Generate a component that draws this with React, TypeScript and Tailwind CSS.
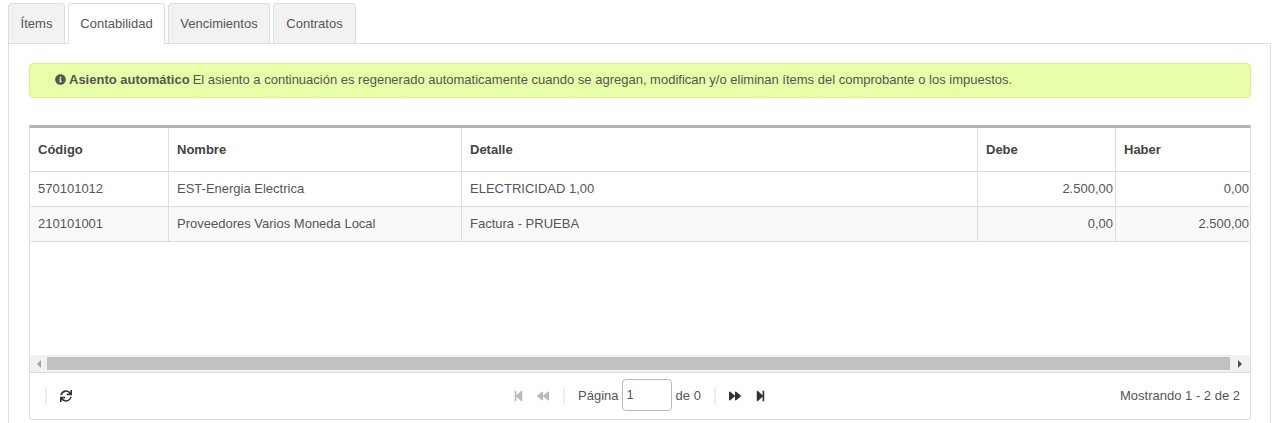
import { FaInfoCircle, FaSync, FaStepBackward, FaBackward, FaForward, FaStepForward } from "react-icons/fa";

const tabs = ["Ítems", "Contabilidad", "Vencimientos", "Contratos"];
const rows = [
  ["570101012", "EST-Energia Electrica", "ELECTRICIDAD 1,00", "2.500,00", "0,00"],
  ["210101001", "Proveedores Varios Moneda Local", "Factura - PRUEBA", "0,00", "2.500,00"],
];
const cols = "grid grid-cols-[139px_293px_516px_138px_134px]";

export default function App() {
  return (
    <div className="h-[423px] w-[1276px] overflow-hidden bg-white pl-2 pr-[5px] pt-[3px] text-[13px] leading-5 text-[#555] font-['Liberation_Sans',Arial,sans-serif]">
      <div className="relative z-10 flex h-[41px] gap-[3px]">
        {tabs.map((t, i) => (
          <div
            key={t}
            className={
              i === 1
                ? "flex h-[41px] w-[97px] items-center justify-center rounded-t border border-b-0 border-[#ddd] bg-white"
                : `flex h-[40px] items-center justify-center rounded-t border border-b-0 border-[#ddd] bg-[#f2f2f2] text-[#555] ${i === 0 ? "w-[57px]" : i === 2 ? "w-[102px]" : "w-[83px]"}`
            }
          >
            {t}
          </div>
        ))}
      </div>
      <div className="-mt-px h-[400px] border border-[#ddd] pl-5 pr-[19px] pt-[19px]">
        <div className="flex h-[35px] items-center rounded border border-[#d9f57e] bg-[#e6ffa8] pb-px pl-[25px]">
          <FaInfoCircle className="mr-[3px] h-[11px] w-[11px] -translate-y-px text-[#555]" />
          <b className="mr-[3px]">Asiento automático</b>
          <span>El asiento a continuación es regenerado automaticamente cuando se agregan, modifican y/o eliminan ítems del comprobante o los impuestos.</span>
        </div>
        <div className="mt-[27px] flex h-[295px] flex-col rounded-b border border-t-[3px] border-[#ddd] border-t-[#b3b3b3]">
          <div className={`${cols} h-[44px] border-b border-[#ddd] font-bold text-[#444]`}>
            {["Código", "Nombre", "Detalle", "Debe", "Haber"].map((h, i) => (
              <div key={h} className={`flex items-center px-2 ${i < 4 ? "border-r border-[#ddd]" : ""}`}>{h}</div>
            ))}
          </div>
          {rows.map((r, ri) => (
            <div key={r[0]} className={`${cols} h-[35px] border-b border-[#ddd] ${ri === 1 ? "bg-[#f9f9f9]" : ""}`}>
              {r.map((c, i) => (
                <div
                  key={i}
                  className={`flex items-center ${i === 3 ? "justify-end pr-0.5" : i === 4 ? "justify-end pr-px" : "px-2"} ${i < 4 ? "border-r border-[#ddd]" : ""}`}
                >
                  {c}
                </div>
              ))}
            </div>
          ))}
          <div className="flex-1" />
          <div className="flex h-[18px] items-center border-b border-[#ddd] bg-[#f1f1f1]">
            <div className="flex w-[17px] justify-center">
              <div className="h-0 w-0 border-y-[4px] border-r-[4px] border-y-transparent border-r-[#a3a3a3]" />
            </div>
            <div className="h-[13px] flex-1 bg-[#c1c1c1]" />
            <div className="flex w-[20px] justify-center">
              <div className="h-0 w-0 border-y-[4px] border-l-[4px] border-y-transparent border-l-[#505050]" />
            </div>
          </div>
          <div className="flex h-[46px] items-center justify-between pl-[15px] pr-[10px]">
            <div className="flex w-[300px] items-center">
              <div className="h-[18px] w-0.5 bg-[#eee]" />
              <FaSync className="ml-[13px] h-3 w-3 text-[#333]" />
            </div>
            <div className="flex items-center">
              <FaStepBackward className="h-3 w-[11px] text-[#bbb]" />
              <FaBackward className="ml-3 h-3 w-[14px] text-[#bbb]" />
              <div className="mx-[13px] h-[18px] w-0.5 bg-[#eee]" />
              <span>Página</span>
              <div className="mb-0.5 ml-[3px] mr-1 flex h-8 w-[50px] items-center rounded border border-[#bbb] px-1 text-[#555]">1</div>
              <span>de 0</span>
              <div className="ml-[13px] mr-3 h-[18px] w-0.5 bg-[#eee]" />
              <FaForward className="h-3 w-[14px] text-[#333]" />
              <FaStepForward className="ml-[13px] h-3 w-[11px] text-[#333]" />
            </div>
            <div className="flex w-[306px] justify-end">Mostrando 1 - 2 de 2</div>
          </div>
        </div>
      </div>
    </div>
  );
}
